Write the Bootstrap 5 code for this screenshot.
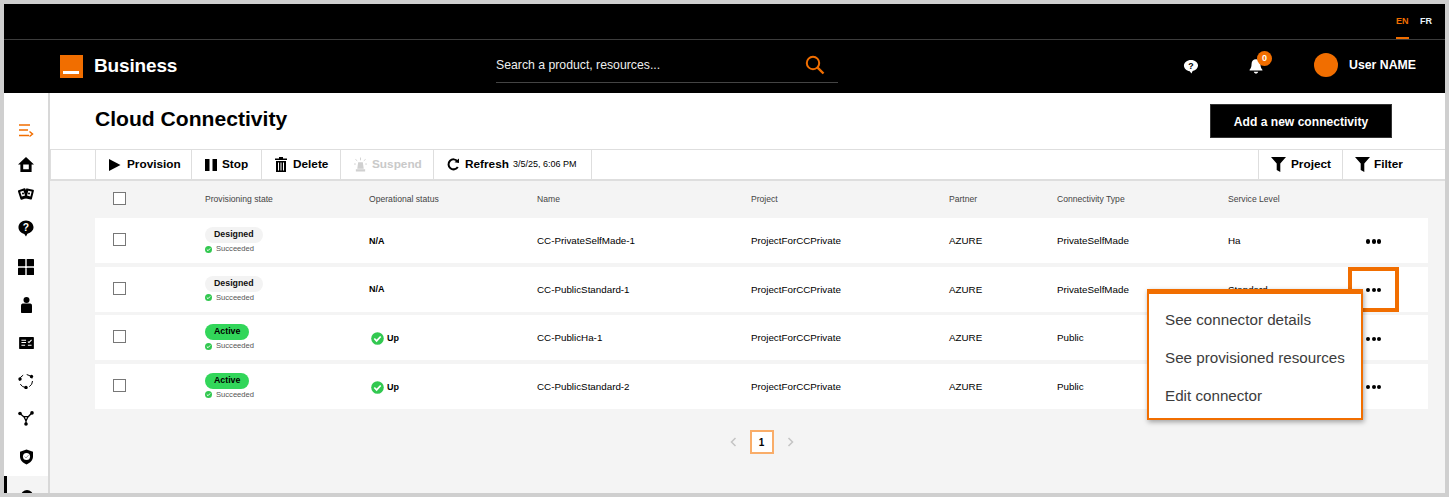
<!DOCTYPE html>
<html lang="en">
<head>
<meta charset="utf-8">
<title>Cloud Connectivity</title>
<link href="https://cdn.jsdelivr.net/npm/bootstrap@5.3.0/dist/css/bootstrap.min.css" rel="stylesheet">
<style>
html,body{height:497px;overflow:hidden}
body{font-family:"Liberation Sans",Arial,sans-serif;background:#fff;color:#000}
.frame{height:497px;border:4px solid #cfcfcf;display:flex;flex-direction:column;overflow:hidden;position:relative}
.lang-bar{height:36px;background:#000;border-bottom:1px solid #3c3c3c;justify-content:flex-end;padding-right:13px;gap:11px;font-size:9px;font-weight:700;color:#eaf4fb;flex:none}
.lang-item{height:35px;display:flex;align-items:center;padding:0 0 1px;line-height:1}
.lang-on{color:#f16e00;border-bottom:2px solid #f16e00;padding-top:2px;width:13px}
.head-bar{height:53px;background:#000;color:#fff;flex:none;position:relative;padding-left:56px}
.logo-box{width:23px;height:23px;background:#f16e00;position:relative;flex:none;margin-top:-1px}
.logo-box::after{content:"";position:absolute;left:3px;right:4px;bottom:4px;height:3px;background:#fff}
.brand-name{font-size:19px;font-weight:700;margin-left:11px;margin-top:-1px;letter-spacing:-.15px;width:83px}
.search-zone{width:342px;height:34px;border-bottom:1px solid #444;margin-left:319px;margin-top:-2px;font-size:12.25px;color:#eee;justify-content:space-between;padding-right:13px}
.search-zone span{margin-top:1px}
.search-zone svg{margin-top:-1px}
.help-zone{margin-left:345px;margin-top:-1px;line-height:0}
.bell-zone{margin-left:50px;position:relative;margin-top:-1px;height:16px;line-height:0}
.bell-count{position:absolute;left:8px;top:-7px;width:15px;height:15px;border-radius:50%;background:#f16e00;color:#fff;font-size:9px;font-weight:700;text-align:center;line-height:15px}
.user-dot{width:24px;height:24px;border-radius:50%;background:#f16e00;margin-left:51px;margin-top:-3px}
.user-name{font-size:12.3px;font-weight:700;margin-left:11px;margin-top:-2px}
.work{flex:1;min-height:0;display:flex}
.side-rail{width:46px;flex:none;border-right:2px solid #d8d8d8;display:flex;flex-direction:column;align-items:center;position:relative;overflow:hidden;padding-top:20px}
.rail-slot{height:38px;display:flex;align-items:center;justify-content:center;flex:none;width:100%}
.rail-slot:nth-child(1),.rail-slot:nth-child(2){height:34px}
.rail-slot:nth-child(3){height:26px}
.rail-slot:nth-child(4){height:42px}
.rail-slot:nth-child(5){height:36px}
.rail-slot:nth-child(6){height:40px}
.rail-slot:nth-child(7){height:36px}
.rail-slot:nth-child(8){height:40px}
.rail-slot:nth-child(9){height:34px}
.rail-slot:nth-child(10){height:44px}
.rail-active{position:absolute;left:0;right:0;top:383px;height:20px;background:#f4f4f4;border-left:3px solid #000}
.rail-active::after{content:"";position:absolute;left:14px;top:14px;width:12px;height:12px;border-radius:50%;background:#000}
.main-zone{flex:1;min-width:0;position:relative;background:#f4f4f4;display:flex;flex-direction:column}
.title-row{height:56px;background:#fff;padding:0 53px 0 45px;justify-content:space-between;flex:none}
.page-name{font-size:21.1px;font-weight:700;margin:0;margin-top:-5px}
.add-btn{background:#000;color:#fff;border:1px solid #333;border-radius:0;width:182px;height:34px;font-size:12.1px;font-weight:700;padding:3px 0 0;margin-top:-1px}
.tool-row{height:32px;background:#fff;border-top:1px solid #dedede;border-bottom:2px solid #dedede;border-left:1px solid #dedede;padding-left:44px;flex:none}
.tool-cell{height:100%;display:flex;align-items:center;gap:6px;padding:0 0 0 13px;border-left:1px solid #dedede;font-size:11.8px;font-weight:700;white-space:nowrap;flex:none}
.tool-cell:nth-child(1){width:96px}
.tool-cell:nth-child(2){width:70px;gap:5px}
.tool-cell:nth-child(3){width:79px}
.tool-cell:nth-child(4){width:93px;gap:5px}
.tool-cell:nth-child(5){width:159px;border-right:1px solid #dedede}
.tool-cell:nth-child(6){width:84px;padding-left:12px;gap:5px}
.tool-cell:nth-child(7){width:103px;padding-left:12px;gap:4px}
.tool-off{color:#c9c9c9}
.stamp{font-size:9px;font-weight:400;margin-left:-2px;margin-top:1px}
.head-grid,.row-grid{display:grid;grid-template-columns:92px 164px 168px 214px 198px 108px 171px 137px 1fr;align-items:center;padding-left:18px;width:1333px;margin-left:45px}
.head-grid{height:37px;font-size:8.6px;color:#444}
.row-grid{height:45px;background:#fff;font-size:9.8px;margin-bottom:3.6px;padding-top:2px}
.tick{width:13px;height:13px;border:1px solid #777;background:#fff;display:block;margin-top:-4px}
.head-grid .tick{margin-top:-3px}
.state-chip{display:inline-block;height:16px;line-height:15px;padding:0 9px;border-radius:8px;font-size:8.8px;font-weight:700;background:#f3f3f3;color:#111}
.state-chip.on{background:#32d65a;color:#000}
.state-sub{display:flex;align-items:center;gap:4px;font-size:7.6px;color:#555;line-height:1;margin-top:2px}
.state-wrap{margin-bottom:3px}
.op-text{font-size:9px;font-weight:700;display:flex;align-items:center;gap:3px}
.op-text svg{margin-left:2px}
.dots{font-size:0;display:flex;gap:1.400px;align-items:center;margin-left:1px}
.dots i{width:4.200px;height:4.200px;border-radius:50%;background:#000;display:block}
.pager{height:50px;gap:13px;margin:5px 0 0 45px;width:1333px;flex:none}
.page-now{width:24px;height:24px;border:2px solid #f9ad69;background:#fff;color:#000;font-size:10px;font-weight:700;display:flex;align-items:center;justify-content:center}
.focus-box{position:absolute;left:1298px;top:174px;width:51px;height:45px;border:4px solid #f16e00;z-index:2}
.ctx-menu{position:absolute;left:1097px;top:196px;width:216px;height:131px;background:#fff;border:2px solid #f16e00;border-top-width:5px;box-shadow:1px 2px 5px rgba(0,0,0,.35);z-index:3;font-size:15.2px;color:#3c3c3c;padding:7px 0 0 16px}
.ctx-line{height:38px;display:flex;align-items:center}
</style>
</head>
<body>
<div class="frame">
  <div class="lang-bar d-flex">
    <span class="lang-item lang-on">EN</span>
    <span class="lang-item">FR</span>
  </div>
  <div class="head-bar d-flex align-items-center">
    <div class="logo-box"></div>
    <div class="brand-name">Business</div>
    <div class="search-zone d-flex align-items-center">
      <span>Search a product, resources...</span>
      <svg width="20" height="20" viewBox="0 0 20 20" fill="none" stroke="#f16e00" stroke-width="2"><circle cx="8" cy="8" r="6.200"/><path d="M12.600 12.600 18.500 18.500" stroke-width="2.400"/></svg>
    </div>
    <div class="help-zone">
      <svg width="16" height="15" viewBox="0 0 17 17"><path fill="#fff" d="M8.500 1C4 1 .5 3.900.5 7.500c0 3.300 2.800 6 6.500 6.400L9 16.500l1.400-2.800c3.500-.8 6.100-3.200 6.100-6.200C16.500 3.900 13 1 8.500 1z"/><text x="8.500" y="11.500" text-anchor="middle" font-size="10" font-weight="700" font-family="Liberation Sans" fill="#000">?</text></svg>
    </div>
    <div class="bell-zone">
      <svg width="14" height="16" viewBox="0 0 15 18"><path fill="#fff" d="M7.500 1.500c-3 0-5 2.300-5 5.300 0 3.500-.9 5-2.200 6.400v1h14.400v-1c-1.300-1.400-2.200-2.900-2.200-6.400 0-3-2-5.300-5-5.300zM5 15.500c.3 1.200 1.300 2 2.500 2s2.200-.8 2.500-2z"/></svg>
      <span class="bell-count">0</span>
    </div>
    <div class="user-dot"></div>
    <div class="user-name">User NAME</div>
  </div>
  <div class="work">
    <div class="side-rail">
      <div class="rail-slot"><svg width="16" height="15" viewBox="0 0 16 15" fill="none" stroke="#f16e00" stroke-width="1.500"><path d="M1 2h11M1 7h9M1 12.500h10M11.500 8.500l3 2.500-3 2.500"/></svg></div>
      <div class="rail-slot"><svg width="16" height="15" viewBox="0 0 16 15"><path d="M8 0 0 7.500h2.400V15h11.200V7.500H16zM5.200 7.500h5.600v4.700H5.200z" fill-rule="evenodd"/></svg></div>
      <div class="rail-slot"><svg width="16" height="14" viewBox="0 0 16 14"><rect x="1" y="2" width="8" height="10" rx="1" transform="rotate(-18 5 7)"/><rect x="7" y="2" width="8" height="10" rx="1" transform="rotate(14 11 7)"/><rect x="3" y="4" width="3.500" height="5" fill="#fff" transform="rotate(-18 5 7)"/><rect x="9.500" y="4" width="3.500" height="5" fill="#fff" transform="rotate(14 11 7)"/><circle cx="5" cy="6.500" r="1"/><circle cx="11" cy="6.500" r="1"/></svg></div>
      <div class="rail-slot"><svg width="16" height="17" viewBox="0 0 17 18"><path d="M8.500.5C4 .5.500 3.700.500 7.800c0 3.300 2.500 6.300 6.200 7L8.500 17.500l1.500-3c3.800-.8 6.500-3.500 6.500-6.700C16.500 3.700 13 .5 8.500.5z"/><text x="8.500" y="12" text-anchor="middle" font-size="11" font-weight="700" font-family="Liberation Sans" fill="#fff">?</text></svg></div>
      <div class="rail-slot"><svg width="16" height="16" viewBox="0 0 16 16"><rect width="7.300" height="7.300" rx=".6"/><rect x="8.700" width="7.300" height="7.300" rx=".6"/><rect y="8.700" width="7.300" height="7.300" rx=".6"/><rect x="8.700" y="8.700" width="7.300" height="7.300" rx=".6"/></svg></div>
      <div class="rail-slot"><svg width="11" height="16" viewBox="0 0 11 16"><circle cx="5.500" cy="3" r="3"/><path d="M0 8.500C0 7 1.200 6.500 2.500 6.500h6C9.800 6.500 11 7 11 8.500V15c0 .6-.4 1-1 1H1c-.6 0-1-.4-1-1z"/></svg></div>
      <div class="rail-slot"><svg width="15" height="12" viewBox="0 0 16 13"><rect width="16" height="13" rx=".5"/><path stroke="#fff" stroke-width="1.200" fill="none" d="M2.500 3.500h5M2.500 6h5M2.500 9h4M9.500 5l1.200 1L13.500 3M9.500 9h4"/></svg></div>
      <div class="rail-slot"><svg width="16" height="16" viewBox="0 0 16 16" fill="none" stroke="#000"><circle cx="8" cy="8" r="6.500" stroke-dasharray="6.500 3.700"/><g fill="#000" stroke="none"><circle cx="13.500" cy="3.500" r="1.700"/><circle cx="8" cy="14.500" r="1.700"/><circle cx="2" cy="6" r="1.700"/></g></svg></div>
      <div class="rail-slot"><svg width="16" height="15" viewBox="0 0 16 15" fill="none" stroke="#000" stroke-width="1.300"><path d="M2 2.500 6 6M14 1.700 10 6M8 10v3M6 5.700h4L8 10z"/><g fill="#000" stroke="none"><circle cx="2" cy="2.500" r="1.800"/><circle cx="14" cy="1.900" r="1.800"/><circle cx="8" cy="13" r="1.800"/></g></svg></div>
      <div class="rail-slot"><svg width="13" height="16" viewBox="0 0 14 16"><path d="M7 0 0 2.300v5.200C0 11.500 3 14.500 7 16c4-1.500 7-4.500 7-8.500V2.300z"/><circle cx="7" cy="7.500" r="3.800" fill="#fff"/><path d="M5 7.500 6.500 9 9.200 6" fill="none" stroke="#888" stroke-width="1"/></svg></div>
      <div class="rail-active"></div>
    </div>
    <div class="main-zone">
      <div class="title-row d-flex align-items-center">
        <h1 class="page-name">Cloud Connectivity</h1>
        <button class="btn add-btn" type="button">Add a new connectivity</button>
      </div>
      <div class="tool-row d-flex">
        <div class="tool-cell"><svg width="12" height="12" viewBox="0 0 12 12"><path d="M0 0 11.500 6 0 12z"/></svg>Provision</div>
        <div class="tool-cell"><svg width="12" height="12" viewBox="0 0 12 12"><rect width="4.500" height="12"/><rect x="7.500" width="4.500" height="12"/></svg>Stop</div>
        <div class="tool-cell"><svg width="12" height="15" viewBox="0 0 12 15"><path d="M4 0h4v1.500h4V3H0V1.500h4zM1 4h10v11H1z"/><path stroke="#fff" d="M3.500 5.500V13.500M6 5.500V13.500M8.500 5.500V13.500"/></svg>Delete</div>
        <div class="tool-cell tool-off"><svg width="13" height="15" viewBox="0 0 14 15" fill="#d0d0d0"><path d="M4.500 5h5l1 7h-7zM2 12.500h10V15H2z"/><path stroke="#d0d0d0" stroke-width="1" d="M7 0v3M1.500 2l2 1.500M12.500 2l-2 1.500M0 7h2M12 7h2"/></svg>Suspend</div>
        <div class="tool-cell"><svg width="12" height="13" viewBox="0 0 12 13" fill="none" stroke="#000" stroke-width="2"><path d="M10.500 3.300A5 5 0 1 0 10.800 9"/><path fill="#000" stroke="none" d="M7.500 4.300 12 5V.5z"/></svg><span>Refresh</span><span class="stamp">3/5/25, 6:06 PM</span></div>
        <div class="tool-cell ms-auto"><svg width="15" height="15" viewBox="0 0 15 15"><path d="M0 0h15L9.300 6.500V15L5.700 13V6.500z"/></svg>Project</div>
        <div class="tool-cell"><svg width="15" height="15" viewBox="0 0 15 15"><path d="M0 0h15L9.300 6.500V15L5.700 13V6.500z"/></svg>Filter</div>
      </div>
      <div class="head-grid">
        <div><span class="tick"></span></div><div>Provisioning state</div><div>Operational status</div><div>Name</div><div>Project</div><div>Partner</div><div>Connectivity Type</div><div>Service Level</div><div></div>
      </div>
      <div class="row-grid">
        <div><span class="tick"></span></div>
        <div class="state-wrap"><span class="state-chip">Designed</span><div class="state-sub"><svg width="7" height="7" viewBox="0 0 7 7"><circle cx="3.500" cy="3.500" r="3.500" fill="#32c850"/><path d="M1.800 3.500 3 4.700 5.200 2.400" stroke="#fff" fill="none"/></svg>Succeeded</div></div>
        <div class="op-text">N/A</div><div>CC-PrivateSelfMade-1</div><div>ProjectForCCPrivate</div><div>AZURE</div><div>PrivateSelfMade</div><div>Ha</div>
        <div class="dots"><i></i><i></i><i></i></div>
      </div>
      <div class="row-grid">
        <div><span class="tick"></span></div>
        <div class="state-wrap"><span class="state-chip">Designed</span><div class="state-sub"><svg width="7" height="7" viewBox="0 0 7 7"><circle cx="3.500" cy="3.500" r="3.500" fill="#32c850"/><path d="M1.800 3.500 3 4.700 5.200 2.400" stroke="#fff" fill="none"/></svg>Succeeded</div></div>
        <div class="op-text">N/A</div><div>CC-PublicStandard-1</div><div>ProjectForCCPrivate</div><div>AZURE</div><div>PrivateSelfMade</div><div>Standard</div>
        <div class="dots"><i></i><i></i><i></i></div>
      </div>
      <div class="row-grid">
        <div><span class="tick"></span></div>
        <div class="state-wrap"><span class="state-chip on">Active</span><div class="state-sub"><svg width="7" height="7" viewBox="0 0 7 7"><circle cx="3.500" cy="3.500" r="3.500" fill="#32c850"/><path d="M1.800 3.500 3 4.700 5.200 2.400" stroke="#fff" fill="none"/></svg>Succeeded</div></div>
        <div class="op-text"><svg width="13" height="13" viewBox="0 0 13 13"><circle cx="6.500" cy="6.500" r="6.300" fill="#32c850"/><path d="M3.300 6.500 5.600 8.900 9.700 4.500" stroke="#fff" stroke-width="1.700" fill="none"/></svg>Up</div><div>CC-PublicHa-1</div><div>ProjectForCCPrivate</div><div>AZURE</div><div>Public</div><div>Ha</div>
        <div class="dots"><i></i><i></i><i></i></div>
      </div>
      <div class="row-grid">
        <div><span class="tick"></span></div>
        <div class="state-wrap"><span class="state-chip on">Active</span><div class="state-sub"><svg width="7" height="7" viewBox="0 0 7 7"><circle cx="3.500" cy="3.500" r="3.500" fill="#32c850"/><path d="M1.800 3.500 3 4.700 5.200 2.400" stroke="#fff" fill="none"/></svg>Succeeded</div></div>
        <div class="op-text"><svg width="13" height="13" viewBox="0 0 13 13"><circle cx="6.500" cy="6.500" r="6.300" fill="#32c850"/><path d="M3.300 6.500 5.600 8.900 9.700 4.500" stroke="#fff" stroke-width="1.700" fill="none"/></svg>Up</div><div>CC-PublicStandard-2</div><div>ProjectForCCPrivate</div><div>AZURE</div><div>Public</div><div>Standard</div>
        <div class="dots"><i></i><i></i><i></i></div>
      </div>
      <div class="pager d-flex align-items-center justify-content-center">
        <svg width="7" height="10" viewBox="0 0 7 10" fill="none" stroke="#c4c4c4" stroke-width="1.500"><path d="M5.500 1 1.500 5l4 4"/></svg>
        <div class="page-now">1</div>
        <svg width="7" height="10" viewBox="0 0 7 10" fill="none" stroke="#c4c4c4" stroke-width="1.500"><path d="M1.500 1l4 4-4 4"/></svg>
      </div>
      <div class="focus-box"></div>
      <div class="ctx-menu">
        <div class="ctx-line">See connector details</div>
        <div class="ctx-line">See provisioned resources</div>
        <div class="ctx-line">Edit connector</div>
      </div>
    </div>
  </div>
</div>
<script src="https://cdn.jsdelivr.net/npm/bootstrap@5.3.0/dist/js/bootstrap.bundle.min.js"></script>
</body>
</html>
